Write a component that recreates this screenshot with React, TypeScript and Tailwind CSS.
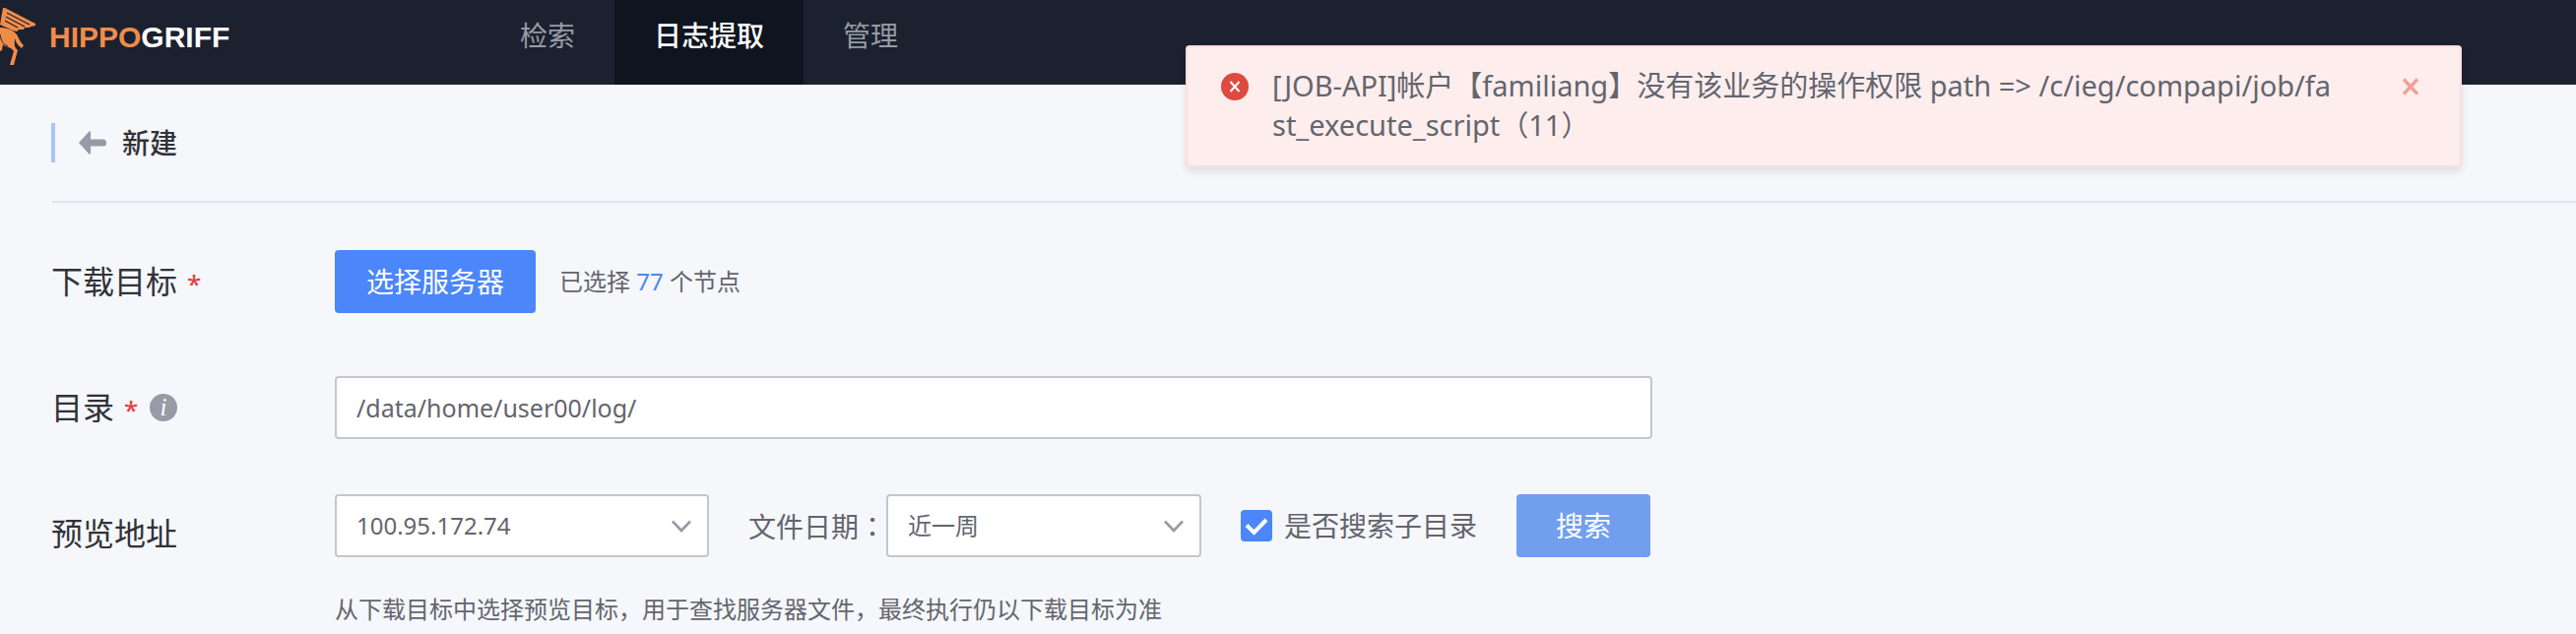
import { useState } from "react";

const navItems = ["检索", "日志提取", "管理"];

function Logo() {
  return (
    <a href="#home" className="flex h-[76px] w-[488px] items-center gap-[13px]">
      <svg width="37" height="60" viewBox="0 0 37 60" fill="none" aria-hidden="true">
        <path d="M3 0 L5 0 L36 16 L36 18 L31 19 L30 20 L25 20 L24 22 L19 22 L17 24 L13 23 L0 17 Z" fill="#f08c4a" />
        <path d="M7 5 L30 17 M6 9 L25 19 M5 13 L18 20" stroke="#1c2130" strokeWidth="1.3" />
        <path d="M0 20 C6 20 13 22 17 27 C19 30 19 33 24 38 L22 41 C18 38 16 35 15 31 C15 35 14 38 16 41 L18 43 L14 58 L10 58 L14 44 C11 39 5 40 3 37 L2 43 L0 44 Z" fill="#f08c4a" />
        <path d="M0 27 C1 33 3 37 8 39" stroke="#1c2130" strokeWidth="1" />
      </svg>
      <span className="font-['Liberation_Sans',sans-serif] text-[30px] font-bold leading-none text-white">
        <span className="text-[#f08c4a]">HIPPO</span>GRIFF
      </span>
    </a>
  );
}

function Chevron() {
  return (
    <svg className="pointer-events-none absolute right-[18px] top-[26px]" width="20" height="13" viewBox="0 0 20 13" fill="none" aria-hidden="true">
      <path d="M1 1.5 L10 11 L19 1.5" stroke="#979ba5" strokeWidth="2.6" />
    </svg>
  );
}

function Select({ id, options, className }: { id: string; options: string[]; className: string }) {
  return (
    <div className={"relative " + className}>
      <select
        id={id}
        className="h-16 w-full appearance-none rounded-[4px] border-2 border-[#c4c6cc] bg-white px-5 text-2xl text-[#63656e] outline-none"
      >
        {options.map((o) => (
          <option key={o}>{o}</option>
        ))}
      </select>
      <Chevron />
    </div>
  );
}

function Required() {
  return <span className="ml-[10px] text-[26px] font-medium text-[#e0443e]">*</span>;
}

function Alert({ onClose }: { onClose: () => void }) {
  return (
    <div
      role="alert"
      className="absolute right-[116px] top-[46px] flex w-[1296px] items-start rounded-[4px] border-2 border-[#fddddd] bg-[#fdeeed] pb-[21px] pl-[34px] pr-[42px] pt-[19px] shadow-[0_4px_8px_rgba(0,0,0,0.1)]"
    >
      <svg className="mt-[7px] shrink-0" width="28" height="28" viewBox="0 0 28 28" fill="none" aria-hidden="true">
        <circle cx="14" cy="14" r="14" fill="#dd4a40" />
        <path d="M9.5 9 L18.5 19 M18.5 9 L9.5 19" stroke="#fff" strokeWidth="2" />
      </svg>
      <p className="ml-6 w-[1080px] break-all text-[29px] leading-10 text-[#63656e]">
        [JOB-API]帐户【familiang】没有该业务的操作权限 path =&gt; /c/ieg/compapi/job/fast_execute_script（11）
      </p>
      <button type="button" aria-label="关闭" onClick={onClose} className="ml-auto mt-3">
        <svg width="16" height="18" viewBox="0 0 16 18" fill="none" aria-hidden="true">
          <path d="M1 1.5 L15 16.5 M15 1.5 L1 16.5" stroke="#f0a09b" strokeWidth="3.4" />
        </svg>
      </button>
    </div>
  );
}

export default function App() {
  const [alertOpen, setAlertOpen] = useState(true);
  const [subdirs, setSubdirs] = useState(true);
  return (
    <div lang="zh-CN" className="relative min-h-screen overflow-hidden bg-[#f5f7fb] font-['Noto_Sans','Noto_Sans_CJK_SC',sans-serif] text-[#63656e]">
      <header className="flex h-[86px] bg-[#1c2130]">
        <Logo />
        <nav className="flex text-[28px] leading-[72px]">
          {navItems.map((item, i) => (
            <a key={item} href="#nav" className={i === 1 ? "bg-[#0e1420] px-10 font-medium text-white" : "px-10 text-[#979ba5]"}>
              {item}
            </a>
          ))}
        </nav>
      </header>

      <main className="pl-[52px]">
        <div className="flex h-[120px] items-center border-b-2 border-[#dce4ea]">
          <div className="flex h-10 items-center border-l-4 border-[#a3c5fd] pl-6">
            <button type="button" aria-label="返回">
              <svg width="28" height="24" viewBox="0 0 28 24" aria-hidden="true">
                <path d="M0 12 L10.5 0.5 Q12 -0.5 12 1.5 V8.5 H25 Q28 8.5 28 12 Q28 15.5 25 15.5 H12 V22.5 Q12 24.5 10.5 23.5 Z" fill="#979ba5" />
              </svg>
            </button>
            <h1 className="ml-4 text-[28px] font-medium leading-10 text-[#313238]">新建</h1>
          </div>
        </div>

        <form onSubmit={(e) => e.preventDefault()} className="pt-12">
          <div className="flex h-16 items-center">
            <div className="w-[288px] text-[32px] text-[#313238]">
              下载目标<Required />
            </div>
            <button type="button" className="h-16 rounded-[4px] bg-[#4b86fa] px-8 text-[28px] text-white">
              选择服务器
            </button>
            <p className="ml-6 text-2xl">
              已选择 <span className="text-[#4b86fa]">77</span> 个节点
            </p>
          </div>

          <div className="mt-16 flex h-16 items-center">
            <div className="flex w-[288px] items-center text-[32px] text-[#313238]">
              <label htmlFor="dir">
                目录<Required />
              </label>
              <svg className="ml-3" width="28" height="28" viewBox="0 0 28 28" aria-hidden="true">
                <circle cx="14" cy="14" r="14" fill="#979ba5" />
                <text x="14" y="22" textAnchor="middle" fill="#fff" fontFamily="Liberation Serif, serif" fontStyle="italic" fontSize="25">
                  i
                </text>
              </svg>
            </div>
            <input
              id="dir"
              type="text"
              defaultValue="/data/home/user00/log/"
              className="h-16 w-[1338px] rounded-[4px] border-2 border-[#c4c6cc] bg-white px-5 text-[25px] text-[#63656e] outline-none"
            />
          </div>

          <div className="mt-14 flex">
            <label htmlFor="host" className="w-[288px] pt-2 text-[32px] leading-[64px] text-[#313238]">
              预览地址
            </label>
            <div>
              <div className="flex items-center">
                <Select id="host" options={["100.95.172.74"]} className="w-[380px]" />
                <label htmlFor="date" className="ml-10 text-[28px]">
                  文件日期<span lang="zh-TW" className="font-['Noto_Sans_CJK_TC',sans-serif]">：</span>
                </label>
                <Select id="date" options={["近一周"]} className="w-[320px]" />
                <label className="ml-10 flex items-center gap-3 text-[28px]">
                  <span className="relative flex">
                    <input
                      type="checkbox"
                      checked={subdirs}
                      onChange={(e) => setSubdirs(e.target.checked)}
                      className="size-8 appearance-none rounded-[4px] border-2 border-[#979ba5] bg-white checked:border-[#4b86fa] checked:bg-[#4b86fa]"
                    />
                    {subdirs && (
                      <svg className="pointer-events-none absolute inset-0" width="32" height="32" viewBox="0 0 32 32" fill="none" aria-hidden="true">
                        <path d="M6 15.5 L13.5 23 L26 10" stroke="#fff" strokeWidth="4" />
                      </svg>
                    )}
                  </span>
                  是否搜索子目录
                </label>
                <button type="submit" className="ml-10 h-16 rounded-[4px] bg-[#729eee] px-10 text-[28px] text-white">
                  搜索
                </button>
              </div>
              <p className="pt-9 text-2xl leading-[34px]">从下载目标中选择预览目标，用于查找服务器文件，最终执行仍以下载目标为准</p>
            </div>
          </div>
        </form>
      </main>

      {alertOpen && <Alert onClose={() => setAlertOpen(false)} />}
    </div>
  );
}
